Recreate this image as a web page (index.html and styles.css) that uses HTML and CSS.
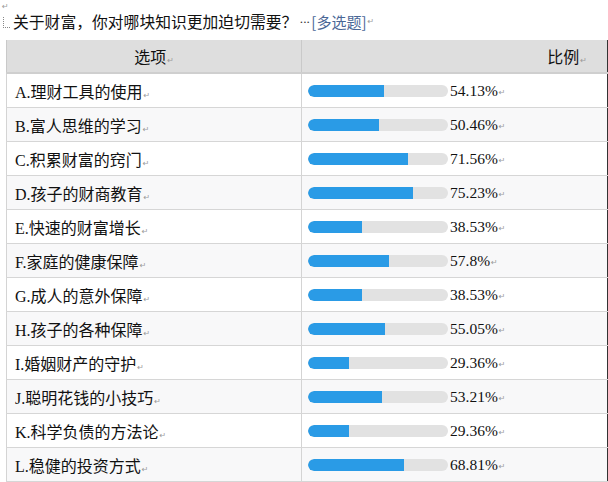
FILE: index.html
```html
<!DOCTYPE html>
<html lang="zh">
<head>
<meta charset="utf-8">
<title>关于财富</title>
<link rel="stylesheet" href="styles.css">
</head>
<body>
<div class="page">
  <div class="mark"><span class="pm">↵</span></div>
  <div class="title"><span class="handle"></span>关于财富，你对哪块知识更加迫切需要？<span class="dots">···</span><span class="tag">[多选题]</span><span class="pm">↵</span></div>
  <table class="survey">
    <thead>
      <tr><th class="c-opt">选项<span class="pm">↵</span></th><th class="c-val">比例<span class="pm">↵</span></th></tr>
    </thead>
    <tbody>
      <tr><td class="opt">A.理财工具的使用<span class="pm">↵</span></td><td class="val"><span class="track"><span class="fill" style="width:54.13%"></span></span><span class="pct">54.13%</span><span class="pm">↵</span></td></tr>
      <tr><td class="opt">B.富人思维的学习<span class="pm">↵</span></td><td class="val"><span class="track"><span class="fill" style="width:50.46%"></span></span><span class="pct">50.46%</span><span class="pm">↵</span></td></tr>
      <tr><td class="opt">C.积累财富的窍门<span class="pm">↵</span></td><td class="val"><span class="track"><span class="fill" style="width:71.56%"></span></span><span class="pct">71.56%</span><span class="pm">↵</span></td></tr>
      <tr><td class="opt">D.孩子的财商教育<span class="pm">↵</span></td><td class="val"><span class="track"><span class="fill" style="width:75.23%"></span></span><span class="pct">75.23%</span><span class="pm">↵</span></td></tr>
      <tr><td class="opt">E.快速的财富增长<span class="pm">↵</span></td><td class="val"><span class="track"><span class="fill" style="width:38.53%"></span></span><span class="pct">38.53%</span><span class="pm">↵</span></td></tr>
      <tr><td class="opt">F.家庭的健康保障<span class="pm">↵</span></td><td class="val"><span class="track"><span class="fill" style="width:57.8%"></span></span><span class="pct">57.8%</span><span class="pm">↵</span></td></tr>
      <tr><td class="opt">G.成人的意外保障<span class="pm">↵</span></td><td class="val"><span class="track"><span class="fill" style="width:38.53%"></span></span><span class="pct">38.53%</span><span class="pm">↵</span></td></tr>
      <tr><td class="opt">H.孩子的各种保障<span class="pm">↵</span></td><td class="val"><span class="track"><span class="fill" style="width:55.05%"></span></span><span class="pct">55.05%</span><span class="pm">↵</span></td></tr>
      <tr><td class="opt">I.婚姻财产的守护<span class="pm">↵</span></td><td class="val"><span class="track"><span class="fill" style="width:29.36%"></span></span><span class="pct">29.36%</span><span class="pm">↵</span></td></tr>
      <tr><td class="opt">J.聪明花钱的小技巧<span class="pm">↵</span></td><td class="val"><span class="track"><span class="fill" style="width:53.21%"></span></span><span class="pct">53.21%</span><span class="pm">↵</span></td></tr>
      <tr><td class="opt">K.科学负债的方法论<span class="pm">↵</span></td><td class="val"><span class="track"><span class="fill" style="width:29.36%"></span></span><span class="pct">29.36%</span><span class="pm">↵</span></td></tr>
      <tr><td class="opt">L.稳健的投资方式<span class="pm">↵</span></td><td class="val"><span class="track"><span class="fill" style="width:68.81%"></span></span><span class="pct">68.81%</span><span class="pm">↵</span></td></tr>
    </tbody>
  </table>
</div>
</body>
</html>
```

FILE: styles.css
```css
html, body {
  margin: 0;
  padding: 0;
  background: #ffffff;
}
.page {
  width: 608px;
  height: 482px;
  overflow: hidden;
  font-family: "Liberation Serif", "Noto Sans CJK SC", serif;
  color: #111;
}
.mark {
  height: 8px;
  line-height: 8px;
  padding-left: 1px;
}
.pm {
  font-family: "DejaVu Sans", sans-serif;
  font-size: 8px;
  color: #9a9a9a;
  margin-left: 1px;
  vertical-align: baseline;
}
.title {
  height: 32px;
  line-height: 28px;
  font-size: 15.8px;
  font-family: "Noto Sans CJK SC", sans-serif;
  padding-left: 3px;
  display: flex;
  align-items: center;
  padding-bottom: 4px;
  box-sizing: border-box;
}
.handle {
  width: 6px;
  height: 10px;
  border-left: 1px dotted #888;
  border-bottom: 1px dotted #888;
  margin-right: 3px;
}
.dots {
  font-family: "Liberation Serif", serif;
  font-size: 13px;
  color: #333;
  margin-left: 2px;
  letter-spacing: -1px;
}
.tag {
  color: #4a6796;
  font-size: 15px;
  margin-left: 2px;
}
.survey {
  margin-left: 6px;
  width: 602px;
  border-collapse: collapse;
  table-layout: fixed;
  border-right: 1px solid #333;
}
.survey th {
  height: 32px;
  padding: 0;
  background: #dedede;
  font-weight: normal;
  font-size: 16px;
  font-family: "Noto Sans CJK SC", sans-serif;
  color: #111;
  border-left: 1px solid #c9c9c9;
  border-bottom: 2px solid #cfcfcf;
}
.c-opt {
  width: 294px;
  text-align: center;
}
.c-val {
  text-align: right;
  padding-right: 20px !important;
}
.survey td {
  height: 33px;
  padding: 0;
  border-left: 1px solid #d4d4d4;
  border-bottom: 1px solid #d6d6d6;
}
.survey tbody tr:nth-child(even) td {
  background: #f8f8f9;
}
.opt {
  padding-left: 8px !important;
  font-size: 16px;
  white-space: nowrap;
}
.val {
  padding-left: 6px !important;
  white-space: nowrap;
}
.val .track,
.val .pct {
  vertical-align: middle;
}
.track {
  display: inline-block;
  width: 140px;
  height: 12px;
  background: #e2e2e2;
  border-radius: 6px;
  overflow: hidden;
}
.fill {
  display: block;
  height: 100%;
  background: #2a9be6;
  border-radius: 6px 0 0 6px;
}
.pct {
  display: inline-block;
  margin-left: 2px;
  font-size: 15.5px;
  font-family: "Liberation Serif", serif;
}
```
